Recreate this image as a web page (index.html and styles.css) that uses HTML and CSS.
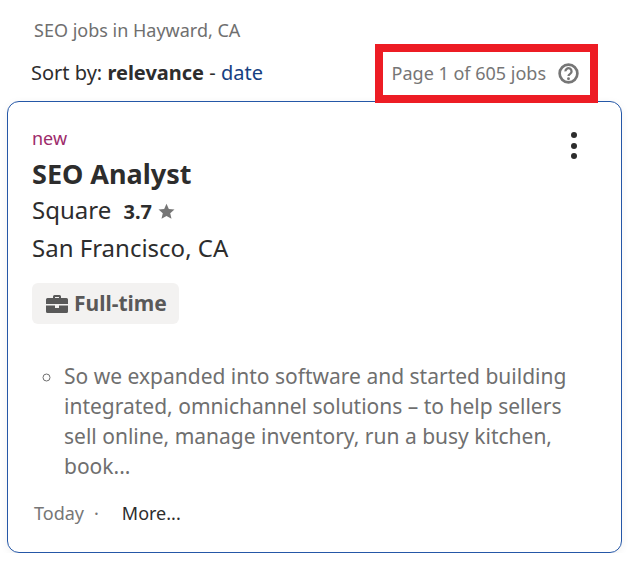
FILE: index.html
```html
<!DOCTYPE html>
<html lang="en">

<head>
  <meta charset="UTF-8">
  <meta name="viewport" content="width=device-width, initial-scale=1.0">
  <title>SEO jobs in Hayward, CA</title>
  <link rel="stylesheet" href="styles.css">
</head>

<body>
  <div class="container">
    <p class="search-title">SEO jobs in Hayward, CA</p>
    <div class="sort-row">
      <p class="sort-by">Sort by: <strong>relevance</strong> - <a href="#">date</a></p>
      <div class="page-count">
        <span>Page 1 of 605 jobs</span>
        <svg class="help-icon" width="21" height="21" viewBox="0 0 22 22" aria-hidden="true">
          <circle cx="11" cy="11" r="9.300" fill="none" stroke="#767676" stroke-width="2.800" />
          <path d="M7.800 8.800a3.200 3.200 0 1 1 4.900 2.600c-1.100.7-1.700 1.100-1.700 2.300" fill="none" stroke="#767676" stroke-width="2.400" />
          <circle cx="11" cy="16.500" r="1.500" fill="#767676" />
        </svg>
      </div>
    </div>

    <div class="job-card">
      <button class="menu-button" aria-label="More actions">
        <span></span><span></span><span></span>
      </button>
      <p class="new-label">new</p>
      <h2 class="job-title">SEO Analyst</h2>
      <p class="company">Square <strong class="rating">3.7</strong>
        <svg class="star" width="17" height="17" viewBox="0 0 16 16" aria-hidden="true">
          <path d="M8 .8l2.200 4.900 5.300.5-4 3.500 1.200 5.200L8 12.200l-4.700 2.700 1.200-5.200-4-3.500 5.300-.5z" fill="#767676" />
        </svg>
      </p>
      <p class="location">San Francisco, CA</p>
      <div class="job-tag">
        <svg width="22" height="18" viewBox="0 0 22 18" aria-hidden="true">
          <path d="M7 3V1.500A1.500 1.500 0 0 1 8.500 0h5A1.500 1.500 0 0 1 15 1.500V3h5.500A1.500 1.500 0 0 1 22 4.500V9H0V4.500A1.500 1.500 0 0 1 1.500 3zm2-1v1h4V2z" fill="#595959" fill-rule="evenodd" />
          <path d="M0 10.500h9V13h4v-2.500h9V16.500A1.500 1.500 0 0 1 20.500 18h-19A1.500 1.500 0 0 1 0 16.500z" fill="#595959" />
        </svg>
        <span class="tag-text">Full-time</span>
      </div>
      <ul class="snippet">
        <li>So we expanded into software and started building integrated, omnichannel solutions – to help sellers sell online, manage inventory, run a busy kitchen, book...</li>
      </ul>
      <div class="card-footer">
        <span class="date">Today</span>
        <span class="dot">·</span>
        <a class="more" href="#">More...</a>
      </div>
    </div>
  </div>

  <div class="highlight"></div>
</body>

</html>
```

FILE: styles.css
```css
* {
  margin: 0;
  padding: 0;
  box-sizing: border-box;
}

body {
  font-family: "Noto Sans", sans-serif;
  background: white;
  color: #2d2d2d;
}

.container {
  padding: 18px 9px 0 7px;
}

.search-title {
  margin-left: 27px;
  font-size: 18px;
  line-height: 24px;
  color: #6f6f6f;
}

.sort-row {
  display: flex;
  justify-content: space-between;
  align-items: center;
  height: 38px;
  margin-top: 12px;
  margin-bottom: 9px;
  padding: 0 43px 0 24px;
}

.sort-by {
  font-size: 20px;
  line-height: 28px;
}

.sort-by a {
  color: #164081;
  text-decoration: none;
}

.page-count {
  display: flex;
  align-items: center;
  gap: 12px;
  font-size: 18px;
  color: #767676;
}

.job-card {
  position: relative;
  height: 452px;
  padding: 23px 24px 0;
  border: 1px solid #2557a7;
  border-radius: 12px;
  box-shadow: 0 2px 8px rgba(0, 0, 0, 0.06);
  background: white;
}

.menu-button {
  position: absolute;
  top: 30px;
  right: 44px;
  display: flex;
  flex-direction: column;
  gap: 4.500px;
  border: none;
  background: none;
}

.menu-button span {
  width: 6px;
  height: 6px;
  border-radius: 50%;
  background: #2d2d2d;
}

.new-label {
  font-size: 18px;
  line-height: 26px;
  color: #9d2b6b;
}

.job-title {
  margin-top: 5px;
  font-size: 27px;
  line-height: 36px;
  font-weight: 700;
}

.company,
.location {
  font-size: 24px;
  line-height: 36px;
}

.rating {
  margin-left: 6px;
  font-size: 20px;
}

.star {
  vertical-align: -1px;
}

.job-tag {
  display: inline-flex;
  align-items: center;
  gap: 6px;
  height: 41px;
  margin-top: 17px;
  padding: 0 12px 0 14px;
  border-radius: 6px;
  background: #f3f2f1;
  font-size: 21px;
  font-weight: 700;
  color: #595959;
}

.tag-text {
  margin-bottom: 2px;
}

.snippet {
  margin-top: 37px;
  padding-left: 32px;
  font-size: 21px;
  line-height: 30px;
  color: #6f6f6f;
  list-style: circle;
}

.card-footer {
  display: flex;
  align-items: center;
  margin-top: 19px;
  font-size: 18px;
  line-height: 26px;
}

.date {
  margin-left: 2px;
  color: #767676;
}

.dot {
  margin-left: 10px;
  color: #767676;
}

.more {
  margin-left: 23px;
  color: #2d2d2d;
  text-decoration: none;
}

.highlight {
  position: absolute;
  top: 44px;
  left: 375px;
  width: 223px;
  height: 59px;
  border: 8px solid #ed1c24;
}
```
